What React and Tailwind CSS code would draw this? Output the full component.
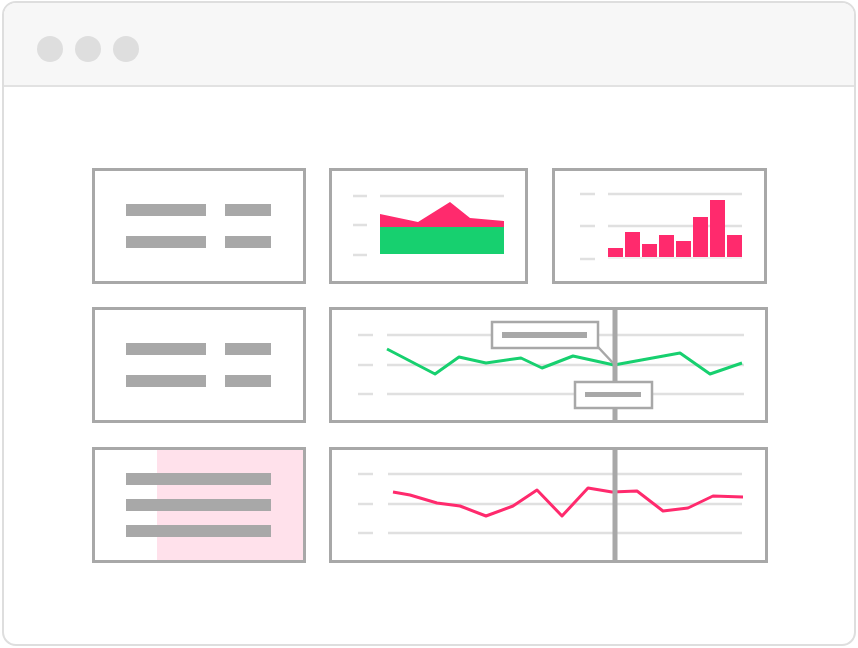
import React from 'react';

const PINK = '#ff2a6d';
const GREEN = '#17d06f';
const GRID = '#e0e0e0';
const BAR = '#a8a8a8';

// card frame; the svg inside uses page coordinates via its viewBox
const Card = ({ box, className = '', children }) => {
  const [x, y, w, h] = box;
  return (
    <div
      className={`relative shrink-0 border-[3px] border-[#a8a8a8] bg-white ${className}`}
      style={{ width: w, height: h }}
    >
      {children && (
        <svg
          className="block w-full h-full"
          viewBox={`${x + 3} ${y + 3} ${w - 6} ${h - 6}`}
          preserveAspectRatio="none"
        >
          {children}
        </svg>
      )}
    </div>
  );
};

const Grid = ({ dashX, lineX, ys }) => (
  <g stroke={GRID} strokeWidth="2.5">
    {ys.map((y, i) => (
      <g key={i}>
        <line x1={dashX[0]} x2={dashX[1]} y1={y} y2={y} />
        <line x1={lineX[0]} x2={lineX[1]} y1={y} y2={y} />
      </g>
    ))}
  </g>
);

const StatCard = () => (
  <div className="w-[214px] h-[116px] shrink-0 border-[3px] border-[#a8a8a8] bg-white flex flex-col items-center justify-center gap-5">
    {[0, 1].map(i => (
      <div key={i} className="flex gap-[19px]">
        <div className="w-[80px] h-3 bg-[#a8a8a8]" />
        <div className="w-[46px] h-3 bg-[#a8a8a8]" />
      </div>
    ))}
  </div>
);

const ListCard = () => (
  <div className="relative w-[214px] h-[116px] shrink-0 border-[3px] border-[#a8a8a8] bg-white flex flex-col items-center justify-center gap-[14px]">
    <div className="absolute inset-y-0 left-[62px] right-0 bg-[#ffe1eb]" />
    {[0, 1, 2].map(i => (
      <div key={i} className="relative w-[145px] h-3 bg-[#a8a8a8]" />
    ))}
  </div>
);

const bars = [
  [608, 248], [625, 232], [642, 244], [659, 235],
  [676, 241], [693, 217], [710, 200], [727, 235],
];

const greenPts = '387,349 435,374 459,357 486,363 521,358 542,368 573,356 614,365 680,353 710,374 742,363';
const pinkPts = '393,492 410,495 437,503 460,506 486,516 513,506 537,490 562,516 588,488 612,492 637,491 663,511 688,508 713,496 743,497';

export default function App() {
  return (
    <div className="w-[858px] h-[648px] bg-white pl-[2px] pt-[1px] font-['Liberation_Sans',sans-serif]">
      <div className="w-[854px] h-[645px] rounded-[14px] border-[2.5px] border-[#dedede] overflow-hidden flex flex-col">
        <div className="h-[84px] shrink-0 bg-[#f7f7f7] border-b-[2.5px] border-[#e2e2e2] flex items-center gap-3 pl-[33px] pt-[9px]">
          <span className="w-[26px] h-[26px] rounded-full bg-[#dedede]" />
          <span className="w-[26px] h-[26px] rounded-full bg-[#dedede]" />
          <span className="w-[26px] h-[26px] rounded-full bg-[#dedede]" />
        </div>

        <div className="flex-1 pt-[81px] pl-[87.5px] flex flex-col gap-[23px]">
          <div className="flex gap-[23px]">
            <StatCard />
            <Card box={[329, 168, 199, 116]} className="mr-px">
              <Grid dashX={[353, 367]} lineX={[380, 504]} ys={[196]} />
              <g stroke={GRID} strokeWidth="2.5">
                <line x1="353" x2="367" y1="225" y2="225" />
                <line x1="353" x2="367" y1="255" y2="255" />
              </g>
              <polygon points="380,214 418,222 450,202 470,218 504,221 504,228 380,228" fill={PINK} />
              <rect x="380" y="227" width="124" height="27" fill={GREEN} />
            </Card>
            <Card box={[552, 168, 215, 116]}>
              <Grid dashX={[580, 595]} lineX={[608, 742]} ys={[194, 226]} />
              <line x1="580" x2="595" y1="259" y2="259" stroke={GRID} strokeWidth="2.5" />
              <line x1="608" x2="742" y1="258" y2="258" stroke="#f0f0f0" strokeWidth="2" />
              {bars.map(([x, top], i) => (
                <rect key={i} x={x} y={top} width="15" height={257 - top} fill={PINK} />
              ))}
            </Card>
          </div>

          <div className="flex gap-[23px]">
            <StatCard />
            <Card box={[329, 307, 439, 116]}>
              <Grid dashX={[358, 373]} lineX={[387, 744]} ys={[335, 365, 394]} />
              <polyline points={greenPts} fill="none" stroke={GREEN} strokeWidth="3" strokeLinejoin="round" />
              <rect x="612.5" y="307" width="5" height="116" fill={BAR} />
              <polyline points="598,347 613,363" fill="none" stroke={BAR} strokeWidth="2.5" />
              <rect x="492" y="322" width="106" height="26" fill="white" stroke={BAR} strokeWidth="2.5" />
              <rect x="502" y="332" width="85" height="6" fill={BAR} />
              <rect x="575" y="382" width="77" height="26" fill="white" stroke={BAR} strokeWidth="2.5" />
              <rect x="585" y="392" width="56" height="5" fill={BAR} />
            </Card>
          </div>

          <div className="flex gap-[23px] mt-px">
            <ListCard />
            <Card box={[329, 447, 439, 116]}>
              <Grid dashX={[358, 373]} lineX={[388, 742]} ys={[474, 504, 533]} />
              <polyline points={pinkPts} fill="none" stroke={PINK} strokeWidth="3" strokeLinejoin="round" />
              <rect x="612.5" y="447" width="5" height="116" fill={BAR} />
            </Card>
          </div>
        </div>
      </div>
    </div>
  );
}
